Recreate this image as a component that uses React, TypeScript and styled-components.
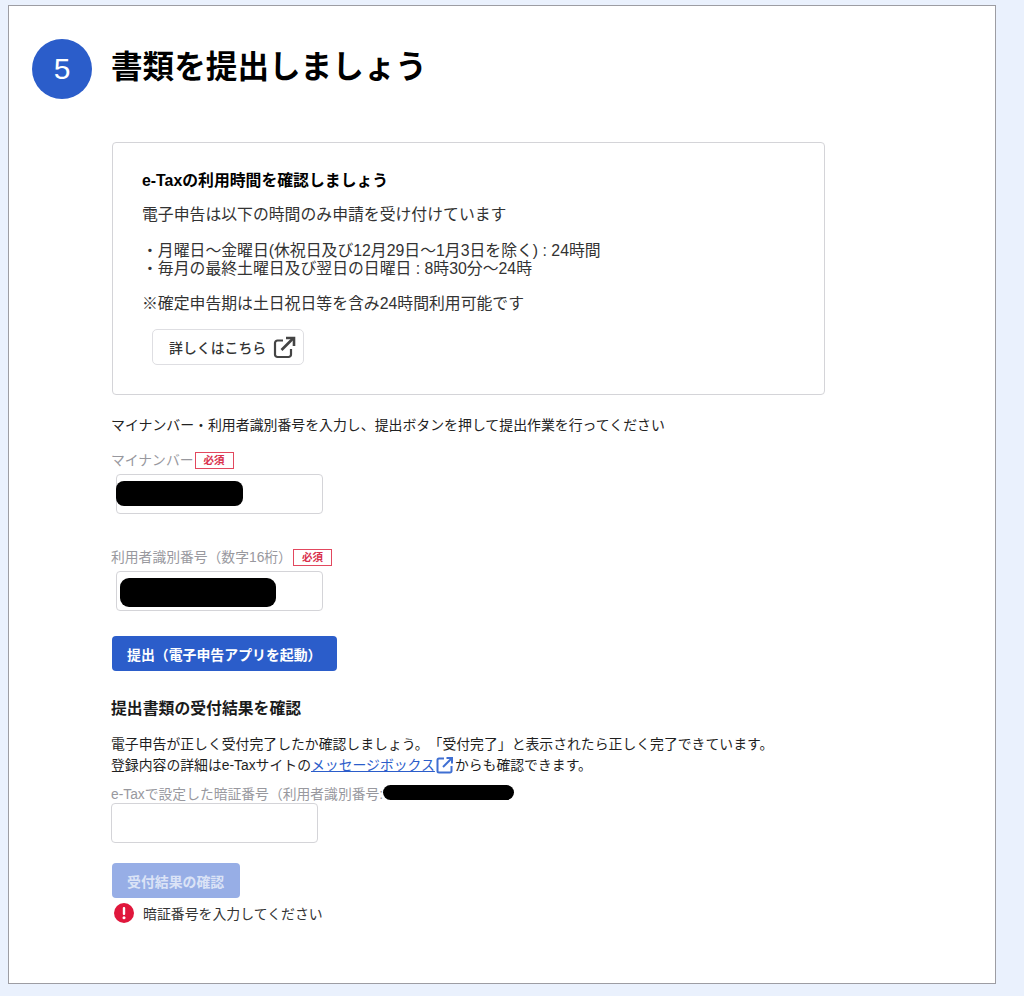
import React from 'react';
import styled, { createGlobalStyle } from 'styled-components';

const GlobalStyle = createGlobalStyle`
    html, body {
        margin: 0;
        padding: 0;
        background-color: #eaf1fd;
    }
    body {
        font-family: 'Liberation Sans', 'Noto Sans CJK JP', sans-serif;
        color: #000000;
        text-spacing-trim: space-all;
    }
`;

const Page = styled('div')`
    height: 996px;
    padding: 5px 0 0 8px;
    box-sizing: border-box;
    overflow: hidden;
`;

const Panel = styled('main')`
    width: 988px;
    height: 979px;
    box-sizing: border-box;
    background-color: #ffffff;
    border: 1px solid #9d9da3;
    padding: 33px 0 0 23px;
`;

const Header = styled('header')`
    display: flex;
    align-items: center;
    gap: 19px;
    height: 60px;
`;

const StepCircle = styled('div')`
    width: 60px;
    height: 60px;
    border-radius: 50%;
    background-color: #2b5dca;
    color: #ffffff;
    font-size: 30px;
    display: flex;
    align-items: center;
    justify-content: center;
`;

const Title = styled('h1')`
    margin: 0 0 5px;
    font-size: 31.6px;
    line-height: 40px;
    font-weight: 700;
`;

const Content = styled('div')`
    margin: 43px 0 0 80px;
    width: 713px;
`;

const InfoCard = styled('section')`
    height: 253px;
    box-sizing: border-box;
    border: 1px solid #d4d4d8;
    border-radius: 4px;
    padding: 27px 29px;
`;

const CardTitle = styled('h3')`
    margin: 0 0 14px;
    font-size: 15.85px;
    line-height: 22px;
    font-weight: 700;
`;

const CardText = styled('p')<{ $after: number }>`
    margin: 0 0 ${p => p.$after}px;
    font-size: 15.85px;
    line-height: 18px;
    color: #333333;
`;

const OutlineButton = styled('button')`
    display: flex;
    align-items: center;
    gap: 7px;
    height: 36px;
    width: 152px;
    margin: 0 0 0 10px;
    padding: 0 0 0 16px;
    box-sizing: border-box;
    background-color: #ffffff;
    border: 1px solid #dedee2;
    border-radius: 5px;
    color: #333333;
    font-family: inherit;
    font-size: 13.9px;
    font-weight: 500;
`;

const Instruction = styled('p')`
    margin: 20px 0 0 -1px;
    font-size: 13.9px;
    line-height: 20px;
    color: #222222;
    white-space: nowrap;
`;

const LabelRow = styled('div')<{ $top: number }>`
    display: flex;
    align-items: center;
    position: relative;
    margin: ${p => p.$top}px 0 0 -1px;
    height: 20px;
    white-space: nowrap;
`;

const FieldLabel = styled('label')`
    padding-top: 2px;
    font-size: 13.8px;
    line-height: 20px;
    color: #98989e;
`;

const RequiredBadge = styled('span')`
    width: 39px;
    height: 17px;
    margin-left: 1px;
    box-sizing: border-box;
    border: 1px solid #e2485e;
    color: #d9304c;
    font-size: 10.5px;
    font-weight: 700;
    line-height: 15px;
    text-align: center;
`;

const InputBox = styled('div')<{ $indent: number; $top: number }>`
    position: relative;
    width: 207px;
    height: 40px;
    box-sizing: border-box;
    margin: ${p => p.$top}px 0 0 ${p => p.$indent}px;
    border: 1px solid #d4d4d8;
    border-radius: 4px;
    background-color: #ffffff;
`;

const Redaction = styled('div')<{ $left: number; $top: number; $width: number; $height: number; $radius: number }>`
    position: absolute;
    left: ${p => p.$left}px;
    top: ${p => p.$top}px;
    width: ${p => p.$width}px;
    height: ${p => p.$height}px;
    border-radius: ${p => p.$radius}px;
    background-color: #000000;
`;

const PrimaryButton = styled('button')<{ $width: number; $top: number; $disabled?: boolean }>`
    display: block;
    width: ${p => p.$width}px;
    height: 35px;
    margin: ${p => p.$top}px 0 0;
    padding: 0 0 0 15px;
    text-align: left;
    border: none;
    border-radius: 4px;
    background-color: ${p => (p.$disabled ? '#97aee6' : '#2b5dca')};
    color: ${p => (p.$disabled ? '#dbe3f6' : '#ffffff')};
    font-family: inherit;
    font-size: 13.9px;
    font-weight: 700;
`;

const SectionTitle = styled('h3')`
    margin: 27px 0 0 -1px;
    font-size: 15.85px;
    line-height: 22px;
    font-weight: 700;
    color: #1a1a1a;
`;

const Body = styled('p')`
    margin: 14px 0 0 -1px;
    font-size: 13.85px;
    line-height: 21px;
    color: #1f1f1f;
    white-space: nowrap;
`;

const TextLink = styled('a')`
    color: #2b5dca;
    text-decoration: underline;
`;

const LinkIcon = styled('svg')`
    width: 18px;
    height: 18px;
    vertical-align: -4px;
    margin: 0 1px 0 1px;
`;

const ErrorRow = styled('div')`
    display: flex;
    align-items: center;
    gap: 9px;
    height: 20px;
    margin: 5px 0 0 2px;
    font-size: 13.9px;
    color: #333333;
`;

const ExternalIcon = () => (
    <svg width="23" height="23" viewBox="0 0 23 23" fill="none" stroke="#444444" strokeWidth="2.200">
        <path d="M10 4.500H4.500A2.500 2.500 0 0 0 2 7V18.500A2.500 2.500 0 0 0 4.500 21H15.500A2.500 2.500 0 0 0 18 18.500V13" />
        <path d="M8.500 14L20 2.500" strokeWidth="2.600" />
        <path d="M13 2H21V10" strokeWidth="2.600" />
    </svg>
);

const ErrorIcon = () => (
    <svg width="20" height="20" viewBox="0 0 20 20">
        <circle cx="10" cy="10" r="10" fill="#e0173c" />
        <rect x="8.800" y="4" width="2.400" height="8" rx="1" fill="#ffffff" />
        <circle cx="10" cy="14.800" r="1.500" fill="#ffffff" />
    </svg>
);

const App = () => {
    return (
        <Page>
            <GlobalStyle />
            <Panel>
                <Header>
                    <StepCircle>5</StepCircle>
                    <Title>書類を提出しましょう</Title>
                </Header>
                <Content>
                    <InfoCard>
                        <CardTitle>e-Taxの利用時間を確認しましょう</CardTitle>
                        <CardText $after={18}>電子申告は以下の時間のみ申請を受け付けています</CardText>
                        <CardText $after={17}>
                            ・月曜日〜金曜日(休祝日及び12月29日〜1月3日を除く) : 24時間
                            <br />
                            ・毎月の最終土曜日及び翌日の日曜日 : 8時30分〜24時
                        </CardText>
                        <CardText $after={16}>※確定申告期は土日祝日等を含み24時間利用可能です</CardText>
                        <OutlineButton>
                            詳しくはこちら
                            <ExternalIcon />
                        </OutlineButton>
                    </InfoCard>
                    <Instruction>
                        マイナンバー・利用者識別番号を入力し、提出ボタンを押して提出作業を行ってください
                    </Instruction>
                    <LabelRow $top={15}>
                        <FieldLabel>マイナンバー</FieldLabel>
                        <RequiredBadge>必須</RequiredBadge>
                    </LabelRow>
                    <InputBox $indent={4} $top={4}>
                        <Redaction $left={-1} $top={6} $width={127} $height={25} $radius={8} />
                    </InputBox>
                    <LabelRow $top={33}>
                        <FieldLabel>利用者識別番号（数字16桁）</FieldLabel>
                        <RequiredBadge>必須</RequiredBadge>
                    </LabelRow>
                    <InputBox $indent={4} $top={4}>
                        <Redaction $left={3} $top={6} $width={156} $height={29} $radius={9} />
                    </InputBox>
                    <PrimaryButton $width={225} $top={25}>
                        提出（電子申告アプリを起動）
                    </PrimaryButton>
                    <SectionTitle>提出書類の受付結果を確認</SectionTitle>
                    <Body>
                        電子申告が正しく受付完了したか確認しましょう。「受付完了」と表示されたら正しく完了できています。
                        <br />
                        登録内容の詳細はe-Taxサイトの
                        <TextLink href="#">メッセージボックス</TextLink>
                        <LinkIcon viewBox="0 0 18 18" fill="none" stroke="#3f6fd2" strokeWidth="2">
                            <path d="M8 2.500H3A1.500 1.500 0 0 0 1.500 4V15A1.500 1.500 0 0 0 3 16.500H14A1.500 1.500 0 0 0 15.500 15V10" />
                            <path d="M7 11L15.500 2.500" />
                            <path d="M10.500 2H16V7.500" />
                        </LinkIcon>
                        からも確認できます。
                    </Body>
                    <LabelRow $top={8}>
                        <FieldLabel>e-Taxで設定した暗証番号（利用者識別番号:</FieldLabel>
                        <Redaction $left={272} $top={1} $width={131} $height={15} $radius={8} />
                    </LabelRow>
                    <InputBox $indent={-1} $top={-1} />
                    <PrimaryButton $width={128} $top={20} $disabled>
                        受付結果の確認
                    </PrimaryButton>
                    <ErrorRow>
                        <ErrorIcon />
                        暗証番号を入力してください
                    </ErrorRow>
                </Content>
            </Panel>
        </Page>
    );
};

export default App;
